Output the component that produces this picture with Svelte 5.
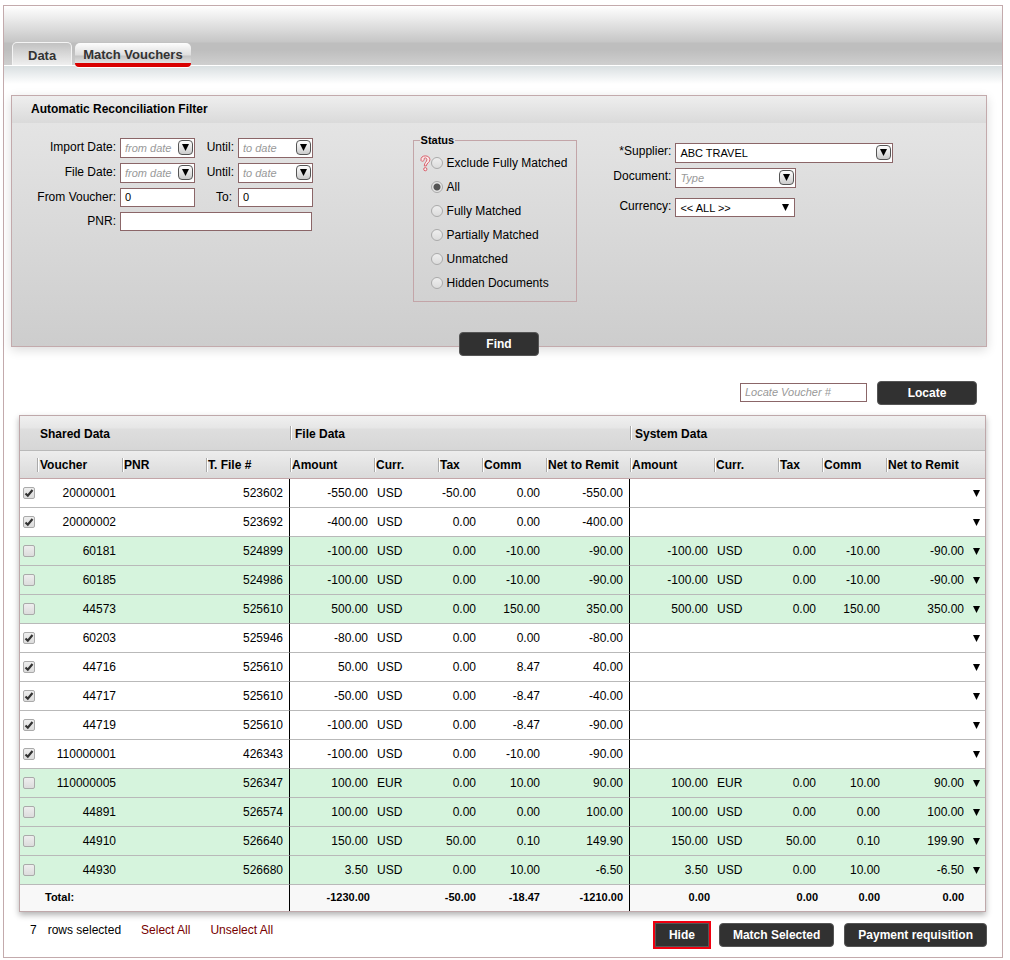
<script>
  let rows = $state([
    { on: true, v: '20000001', f: '523602', file: ['-550.00', 'USD', '-50.00', '0.00', '-550.00'] },
    { on: true, v: '20000002', f: '523692', file: ['-400.00', 'USD', '0.00', '0.00', '-400.00'] },
    { on: false, v: '60181', f: '524899', file: ['-100.00', 'USD', '0.00', '-10.00', '-90.00'], sys: ['-100.00', 'USD', '0.00', '-10.00', '-90.00'] },
    { on: false, v: '60185', f: '524986', file: ['-100.00', 'USD', '0.00', '-10.00', '-90.00'], sys: ['-100.00', 'USD', '0.00', '-10.00', '-90.00'] },
    { on: false, v: '44573', f: '525610', file: ['500.00', 'USD', '0.00', '150.00', '350.00'], sys: ['500.00', 'USD', '0.00', '150.00', '350.00'] },
    { on: true, v: '60203', f: '525946', file: ['-80.00', 'USD', '0.00', '0.00', '-80.00'] },
    { on: true, v: '44716', f: '525610', file: ['50.00', 'USD', '0.00', '8.47', '40.00'] },
    { on: true, v: '44717', f: '525610', file: ['-50.00', 'USD', '0.00', '-8.47', '-40.00'] },
    { on: true, v: '44719', f: '525610', file: ['-100.00', 'USD', '0.00', '-8.47', '-90.00'] },
    { on: true, v: '110000001', f: '426343', file: ['-100.00', 'USD', '0.00', '-10.00', '-90.00'] },
    { on: false, v: '110000005', f: '526347', file: ['100.00', 'EUR', '0.00', '10.00', '90.00'], sys: ['100.00', 'EUR', '0.00', '10.00', '90.00'] },
    { on: false, v: '44891', f: '526574', file: ['100.00', 'USD', '0.00', '0.00', '100.00'], sys: ['100.00', 'USD', '0.00', '0.00', '100.00'] },
    { on: false, v: '44910', f: '526640', file: ['150.00', 'USD', '50.00', '0.10', '149.90'], sys: ['150.00', 'USD', '50.00', '0.10', '199.90'] },
    { on: false, v: '44930', f: '526680', file: ['3.50', 'USD', '0.00', '10.00', '-6.50'], sys: ['3.50', 'USD', '0.00', '10.00', '-6.50'] }
  ]);

  const moneyHeads = ['Amount', 'Curr.', 'Tax', 'Comm', 'Net to Remit'];
  const statuses = ['Exclude Fully Matched', 'All', 'Fully Matched', 'Partially Matched', 'Unmatched', 'Hidden Documents'];
  const blank = ['', '', '', '', ''];

  let status = $state('All');
  let selected = $derived(rows.filter((r) => r.on).length);

  function setAll(event, value) {
    event.preventDefault();
    rows.forEach((r) => (r.on = value));
  }
</script>

{#snippet combo(id, placeholder, value)}
  <div class="combo">
    <input {id} type="text" {placeholder} {value} />
    <button type="button" aria-label="Open list">
      <svg width="7" height="7" viewBox="0 0 7 7"><path d="M0 0H7L3.5 7Z" /></svg>
    </button>
  </div>
{/snippet}

<div class="frame">
  <header>
    <nav>
      <a class="tab" href="#data">Data</a>
      <a class="tab active" href="#match">Match Vouchers</a>
    </nav>
  </header>

  <main>
    <section class="panel">
      <h2>Automatic Reconciliation Filter</h2>
      <div class="filters">
        <div class="dates">
          <label for="imp-from">Import Date:</label>
          {@render combo('imp-from', 'from date', '')}
          <label for="imp-to">Until:</label>
          {@render combo('imp-to', 'to date', '')}
          <label for="file-from">File Date:</label>
          {@render combo('file-from', 'from date', '')}
          <label for="file-to">Until:</label>
          {@render combo('file-to', 'to date', '')}
          <label for="v-from">From Voucher:</label>
          <input id="v-from" class="box" type="text" value="0" />
          <label for="v-to" class="to">To:</label>
          <input id="v-to" class="box" type="text" value="0" />
          <label for="pnr">PNR:</label>
          <input id="pnr" class="box wide" type="text" />
        </div>

        <div class="status">
          <fieldset>
            <legend>Status</legend>
            {#each statuses as s, i}
              <div class="option">
                <span class="help">
                  {#if i === 0}
                    <svg width="11" height="17" viewBox="0 0 11 17" fill="#fbeaea" stroke="#d9606c" stroke-width="1">
                      <path d="M1 5.5C.6 2.4 2.6.9 5.3.9 8 .9 9.900 2.400 9.900 4.700 9.900 7.600 6.700 7.700 6.300 10.900H4.300C4.300 7.500 6.900 6.800 6.900 4.800 6.900 3.600 6.200 2.900 5.200 2.900 4.400 2.900 4 3.400 4.100 4 4.400 5.100 3.700 6.200 2.600 6.200 1.700 6.200 1.100 6 1 5.500Z" />
                      <circle cx="5.300" cy="14.200" r="1.600" />
                    </svg>
                  {/if}
                </span>
                <input id={'st' + i} type="radio" name="status" value={s} bind:group={status} />
                <label for={'st' + i}>{s}</label>
              </div>
            {/each}
          </fieldset>
        </div>

        <div class="source">
          <label for="supplier">*Supplier:</label>
          <div>{@render combo('supplier', '', 'ABC TRAVEL')}</div>
          <label for="doc">Document:</label>
          <div class="half">{@render combo('doc', 'Type', '')}</div>
          <label for="cur" class="cur">Currency:</label>
          <select id="cur" class="box cur"><option>&lt;&lt; ALL &gt;&gt;</option></select>
        </div>
      </div>
    </section>
    <div class="find"><button type="button" class="btn medium">Find</button></div>

    <div class="locate">
      <input class="box" type="text" placeholder="Locate Voucher #" aria-label="Locate Voucher #" />
      <button type="button" class="btn large">Locate</button>
    </div>

    <table>
      <colgroup>
        <col class="c-check" /><col class="c-voucher" /><col class="c-84" /><col class="c-84" />
        {#each [0, 1] as g}
          <col class="c-84" /><col class="c-64" /><col class="c-44" /><col class="c-64" /><col class="c-84" />
        {/each}
        <col class="c-arrow" />
      </colgroup>
      <thead>
        <tr class="groups">
          <th></th>
          <th colspan="3">Shared Data</th>
          <th colspan="5" class="sep">File Data</th>
          <th colspan="6" class="sep">System Data</th>
        </tr>
        <tr class="heads">
          <th></th>
          <th class="sep first">Voucher</th>
          <th class="sep">PNR</th>
          <th class="sep">T. File #</th>
          {#each [...moneyHeads, ...moneyHeads] as h}<th class="sep">{h}</th>{/each}
          <th></th>
        </tr>
      </thead>
      <tbody>
        {#each rows as r}
          <tr class:matched={r.sys}>
            <td class="check"><input type="checkbox" bind:checked={r.on} aria-label={'Select ' + r.v} /></td>
            <td>{r.v}</td>
            <td></td>
            <td class="edge">{r.f}</td>
            {#each r.file as c, i}<td class:curr={i === 1} class:edge={i === 4}>{c}</td>{/each}
            {#each r.sys ?? blank as c, i}<td class:curr={i === 1}>{c}</td>{/each}
            <td class="more">
              <button type="button" aria-label={'Details of ' + r.v}>
                <svg width="7" height="7" viewBox="0 0 7 7"><path d="M0 0H7L3.5 7Z" /></svg>
              </button>
            </td>
          </tr>
        {/each}
      </tbody>
      <tfoot>
        <tr>
          <td></td>
          <td class="total">Total:</td>
          <td></td>
          <td class="edge"></td>
          <td class="amount">-1230.00</td>
          <td></td>
          <td>-50.00</td>
          <td>-18.47</td>
          <td class="edge">-1210.00</td>
          <td class="amount">0.00</td>
          <td></td>
          <td class="amount">0.00</td>
          <td>0.00</td>
          <td>0.00</td>
          <td></td>
        </tr>
      </tfoot>
    </table>

    <footer>
      <div class="summary">
        <span class="count">{selected}</span>
        <span>rows selected</span>
        <a href="#all" onclick={(e) => setAll(e, true)}>Select All</a>
        <a href="#none" onclick={(e) => setAll(e, false)}>Unselect All</a>
      </div>
      <div class="actions">
        <button type="button" class="btn marked">Hide</button>
        <button type="button" class="btn">Match Selected</button>
        <button type="button" class="btn">Payment requisition</button>
      </div>
    </footer>
  </main>
</div>

<style>
  :global(body) {
    background: #fff;
  }
  .frame,
  .frame * {
    box-sizing: border-box;
  }
  .frame {
    margin: 5px 7px 2px 3px;
    border: 1px solid #c3aaac;
    font: 12px/16px 'Liberation Sans', Arial, sans-serif;
    color: #000;
    background: #fff;
  }
  input,
  select,
  button {
    font: inherit;
    color: inherit;
    margin: 0;
  }
  header {
    background: linear-gradient(#fff 0, #c6c6c6 36px, #bebebe 37px, #bebebe 44px, #cfcfcf 59px);
    border-bottom: 1px solid #fff;
  }
  nav {
    display: flex;
    align-items: flex-end;
    gap: 3px;
    padding: 36px 8px 0;
  }
  .tab {
    height: 23px;
    padding: 3px 15px 0;
    border: 1px solid #f4f4f4;
    border-bottom: 0;
    border-radius: 5px 5px 0 0;
    background: linear-gradient(#c2c2c2, #efefef);
    font-size: 13px;
    line-height: 20px;
    font-weight: bold;
    color: #333;
    text-decoration: none;
  }
  .tab.active {
    margin-bottom: -2px;
    height: 24px;
    padding: 2px 8px 0;
    border: 0;
    border-radius: 5px 5px 4px 4px;
    background: linear-gradient(#fdfdfd 0, #dedede 12px, #c4c4c4 13px, #e2e2e2 20px, #d90000 20px);
    box-shadow: 0 1px 0 #fff;
  }
  main {
    padding: 29px 15px 10px 7px;
    background: linear-gradient(#d9dfe1, #fff 18px);
  }
  .panel {
    border: 1px solid #c3aaac;
    background: linear-gradient(#e4e4e4 28px, #cdcdcd);
    box-shadow: 0 3px 10px rgba(0, 0, 0, 0.14);
  }
  h2 {
    margin: 0;
    padding: 0 19px 1px;
    font-size: 12px;
    line-height: 26px;
    background: linear-gradient(#eee, #dadada);
  }
  .filters {
    display: grid;
    grid-template-columns: 401fr 187fr 387fr;
    align-items: start;
    padding-bottom: 44px;
  }
  .dates {
    display: grid;
    grid-template-columns: 85px 75px 35px 75px;
    grid-template-rows: 20px 20px 19px 19px;
    gap: 5px 4px;
    padding: 15px 0 0 19px;
  }
  .dates label,
  .source label {
    text-align: right;
    line-height: 18px;
    white-space: nowrap;
  }
  .to {
    padding-right: 2px;
  }
  .combo {
    display: flex;
    align-items: center;
    height: 20px;
    padding: 0 1px 1px 0;
    border: 1px solid #8b6668;
    background: #fff;
  }
  .combo input {
    flex: 1;
    min-width: 0;
    width: 0;
    height: 17px;
    padding: 1px 0 0 4px;
    border: 0;
    outline: 0;
    background: none;
    font-size: 11px;
  }
  .combo button {
    display: flex;
    align-items: center;
    justify-content: center;
    width: 15px;
    height: 15px;
    padding: 0;
    border: 1px solid #555;
    border-radius: 4px;
    background: linear-gradient(#fff, #ccc);
  }
  input::placeholder {
    color: #999;
    font-style: italic;
    opacity: 1;
  }
  .box {
    width: 100%;
    height: 19px;
    padding: 0 4px 1px;
    border: 1px solid #8b6668;
    border-radius: 0;
    background: #fff;
    font-size: 11px;
  }
  .wide {
    grid-column: 2 / 5;
    width: calc(100% - 1px);
  }
  fieldset {
    width: 164px;
    margin: 0;
    padding: 3px 0 6px 6px;
    border: 1px solid #c3a5a8;
  }
  .status {
    padding-top: 9px;
  }
  legend {
    padding: 0 1px;
    font-size: 11px;
    font-weight: bold;
  }
  .option {
    display: flex;
    align-items: center;
    height: 24px;
    white-space: nowrap;
  }
  .help {
    display: flex;
    width: 11px;
  }
  .option label {
    padding-left: 4px;
  }
  input[type='radio'],
  input[type='checkbox'] {
    appearance: none;
    flex: none;
    width: 12px;
    height: 12px;
    border: 1px solid #aaa;
    background: linear-gradient(#eee, #dcdcdc);
  }
  input[type='radio'] {
    border-radius: 50%;
  }
  input[type='radio']:checked {
    background: radial-gradient(circle, #555 3px, #e6e6e6 4px);
  }
  input[type='checkbox'] {
    display: block;
    border-radius: 2px;
  }
  input[type='checkbox']:checked {
    background:
      url("data:image/svg+xml,%3Csvg xmlns='http://www.w3.org/2000/svg' viewBox='0 0 10 10'%3E%3Cpath d='M1.500 5.500 3.800 7.700 8.500 2' fill='none' stroke='%23333' stroke-width='2.200'/%3E%3C/svg%3E") center / 10px 10px no-repeat,
      linear-gradient(#eee, #dcdcdc);
  }
  .source {
    display: grid;
    grid-template-columns: 72px 218px;
    gap: 5px 4px;
    padding-top: 20px;
  }
  .source label {
    line-height: 16px;
  }
  .half {
    width: 121px;
  }
  .cur {
    margin-top: 5px;
  }
  select.box {
    appearance: none;
    width: 120px;
    padding-bottom: 0;
    background: #fff url("data:image/svg+xml,%3Csvg xmlns='http://www.w3.org/2000/svg' viewBox='0 0 7 7'%3E%3Cpath d='M0 0H7L3.500 7Z'/%3E%3C/svg%3E") right 5px center / 7px 7px no-repeat;
  }
  .btn {
    height: 24px;
    padding: 0 13px;
    border: 1px solid #555;
    border-radius: 4px;
    background: #313131;
    color: #fff;
    font-weight: bold;
    white-space: nowrap;
  }
  .medium {
    width: 80px;
  }
  .large {
    width: 100px;
  }
  .marked {
    outline: 2px solid #f00010;
    border-radius: 0;
  }
  .find {
    display: flex;
    justify-content: center;
    margin-top: -15px;
  }
  .locate {
    display: flex;
    justify-content: flex-end;
    gap: 10px;
    padding: 25px 10px 10px 0;
  }
  .locate .box {
    width: 127px;
    margin-top: 2px;
  }
  table {
    width: calc(100% - 9px);
    margin-left: 8px;
    table-layout: fixed;
    border-collapse: separate;
    border-spacing: 0;
    border: 1px solid #bfa8aa;
    box-shadow: 0 3px 6px rgba(0, 0, 0, 0.3);
  }
  .c-check {
    width: 17px;
  }
  .c-voucher {
    width: 85px;
  }
  .c-84 {
    width: 84px;
  }
  .c-64 {
    width: 64px;
  }
  .c-44 {
    width: 44px;
  }
  .c-arrow {
    width: 15px;
  }
  th {
    padding: 0 0 0 3px;
    text-align: left;
    white-space: nowrap;
  }
  .groups {
    height: 35px;
    background: linear-gradient(#f0f0f0 0, #e6e6e6 12px, #dedede 13px, #d6d6d6 34px);
  }
  .groups th {
    padding-top: 2px;
    border-bottom: 1px solid #b9b9b9;
  }
  .groups .sep {
    padding-left: 5px;
  }
  .heads {
    height: 28px;
    background: linear-gradient(#ededed, #d9d9d9);
  }
  .heads th {
    padding-left: 2px;
    border-bottom: 1px solid #c3a5a8;
  }
  .heads .first {
    padding-left: 3px;
  }
  .sep {
    background:
      linear-gradient(#aaa, #aaa) 0 50% / 1px 14px no-repeat,
      linear-gradient(#fff, #fff) 1px 50% / 1px 14px no-repeat;
  }
  td {
    padding: 0 6px 0 0;
    text-align: right;
  }
  tbody tr {
    height: 29px;
    background: #fff;
  }
  tbody td {
    border-bottom: 1px solid #b9b9b9;
  }
  tbody .matched {
    background: #d6f4dd;
  }
  td.edge {
    border-right: 1px solid #000;
  }
  td.curr {
    padding-left: 3px;
    text-align: left;
  }
  td.check {
    padding: 0 0 1px 3px;
  }
  td.more {
    padding: 0;
  }
  .more button {
    display: block;
    margin: 0 3px;
    padding: 4px 0;
    border: 0;
    background: none;
  }
  .more svg {
    display: block;
  }
  tfoot tr {
    height: 26px;
    background: #f8f8f8;
    font-size: 11px;
    font-weight: bold;
  }
  tfoot td {
    padding-bottom: 3px;
  }
  tfoot .total {
    padding-left: 8px;
    text-align: left;
  }
  tfoot .amount {
    padding-right: 4px;
  }
  footer {
    display: flex;
    justify-content: space-between;
    padding: 11px 0 0 19px;
  }
  .summary {
    display: flex;
    gap: 20px;
    line-height: 14px;
  }
  .count {
    margin-right: -9px;
  }
  .summary a {
    color: #700;
    text-decoration: none;
  }
  .actions {
    display: flex;
    gap: 10px;
  }
</style>
